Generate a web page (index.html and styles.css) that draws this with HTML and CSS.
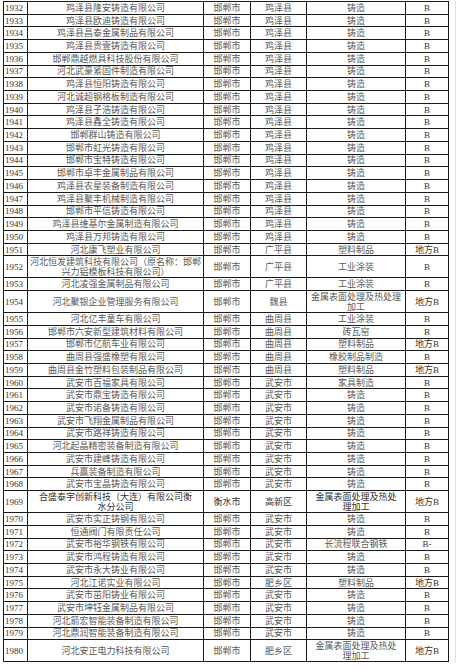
FILE: index.html
```html
<!DOCTYPE html>
<html lang="zh">
<head>
<meta charset="utf-8">
<link rel="stylesheet" href="styles.css">
</head>
<body>
<div class="page">
<table class="grid">
<colgroup><col class="c-no"><col class="c-name"><col class="c-city"><col class="c-county"><col class="c-ind"><col class="c-lvl"></colgroup>
<tbody>
<tr><td class="no">1932</td><td>鸡泽县隆安铸造有限公司</td><td>邯郸市</td><td>鸡泽县</td><td>铸造</td><td class="lv">B</td></tr>
<tr><td class="no">1933</td><td>鸡泽县欧迪铸造有限公司</td><td>邯郸市</td><td>鸡泽县</td><td>铸造</td><td class="lv">B</td></tr>
<tr><td class="no">1934</td><td>鸡泽县昌泰金属制品有限公司</td><td>邯郸市</td><td>鸡泽县</td><td>铸造</td><td class="lv">B</td></tr>
<tr><td class="no">1935</td><td>鸡泽县贵壹铸造有限公司</td><td>邯郸市</td><td>鸡泽县</td><td>铸造</td><td class="lv">B</td></tr>
<tr><td class="no">1936</td><td>邯郸鼎越燃具科技股份有限公司</td><td>邯郸市</td><td>鸡泽县</td><td>铸造</td><td class="lv">B</td></tr>
<tr><td class="no">1937</td><td>河北武豪紧固件制造有限公司</td><td>邯郸市</td><td>鸡泽县</td><td>铸造</td><td class="lv">B</td></tr>
<tr><td class="no">1938</td><td>鸡泽县恒阳铸造有限公司</td><td>邯郸市</td><td>鸡泽县</td><td>铸造</td><td class="lv">B</td></tr>
<tr><td class="no">1939</td><td>河北诚超钢格板制造有限公司</td><td>邯郸市</td><td>鸡泽县</td><td>铸造</td><td class="lv">B</td></tr>
<tr><td class="no">1940</td><td>鸡泽县子浩铸造有限公司</td><td>邯郸市</td><td>鸡泽县</td><td>铸造</td><td class="lv">B</td></tr>
<tr><td class="no">1941</td><td>鸡泽县鑫全铸造有限公司</td><td>邯郸市</td><td>鸡泽县</td><td>铸造</td><td class="lv">B</td></tr>
<tr><td class="no">1942</td><td>邯郸群山铸造有限公司</td><td>邯郸市</td><td>鸡泽县</td><td>铸造</td><td class="lv">B</td></tr>
<tr><td class="no">1943</td><td>邯郸市虹光铸造有限公司</td><td>邯郸市</td><td>鸡泽县</td><td>铸造</td><td class="lv">B</td></tr>
<tr><td class="no">1944</td><td>邯郸市宝特铸造有限公司</td><td>邯郸市</td><td>鸡泽县</td><td>铸造</td><td class="lv">B</td></tr>
<tr><td class="no">1945</td><td>邯郸市卓丰金属制品有限公司</td><td>邯郸市</td><td>鸡泽县</td><td>铸造</td><td class="lv">B</td></tr>
<tr><td class="no">1946</td><td>鸡泽县农星装备制造有限公司</td><td>邯郸市</td><td>鸡泽县</td><td>铸造</td><td class="lv">B</td></tr>
<tr><td class="no">1947</td><td>鸡泽县聚丰机械制造有限公司</td><td>邯郸市</td><td>鸡泽县</td><td>铸造</td><td class="lv">B</td></tr>
<tr><td class="no">1948</td><td>邯郸市平信铸造有限公司</td><td>邯郸市</td><td>鸡泽县</td><td>铸造</td><td class="lv">B</td></tr>
<tr><td class="no">1949</td><td>鸡泽县维基尔金属制造有限公司</td><td>邯郸市</td><td>鸡泽县</td><td>铸造</td><td class="lv">B</td></tr>
<tr><td class="no">1950</td><td>鸡泽县万邦铸造有限公司</td><td>邯郸市</td><td>鸡泽县</td><td>铸造</td><td class="lv">B</td></tr>
<tr><td class="no">1951</td><td>河北康飞塑业有限公司</td><td>邯郸市</td><td>广平县</td><td>塑料制品</td><td class="lv">地方B</td></tr>
<tr class="dbl"><td class="no">1952</td><td>河北恒发建筑科技有限公司（原名称：邯郸<br>兴力铝模板科技有限公司）</td><td>邯郸市</td><td>广平县</td><td>工业涂装</td><td class="lv">B</td></tr>
<tr><td class="no">1953</td><td>河北凌强金属制品有限公司</td><td>邯郸市</td><td>广平县</td><td>工业涂装</td><td class="lv">B</td></tr>
<tr class="dbl"><td class="no">1954</td><td>河北聚银企业管理服务有限公司</td><td>邯郸市</td><td>魏县</td><td>金属表面处理及热处理<br>加工</td><td class="lv">地方B</td></tr>
<tr><td class="no">1955</td><td>河北亿丰童车有限公司</td><td>邯郸市</td><td>曲周县</td><td>工业涂装</td><td class="lv">B</td></tr>
<tr><td class="no">1956</td><td>邯郸市六安新型建筑材料有限公司</td><td>邯郸市</td><td>曲周县</td><td>砖瓦窑</td><td class="lv">B</td></tr>
<tr><td class="no">1957</td><td>邯郸市亿航车业有限公司</td><td>邯郸市</td><td>曲周县</td><td>塑料制品</td><td class="lv">地方B</td></tr>
<tr><td class="no">1958</td><td>曲周县强盛橡塑有限公司</td><td>邯郸市</td><td>曲周县</td><td>橡胶制品制造</td><td class="lv">B</td></tr>
<tr><td class="no">1959</td><td>曲周县金竹塑料包装制品有限公司</td><td>邯郸市</td><td>曲周县</td><td>塑料制品</td><td class="lv">地方B</td></tr>
<tr><td class="no">1960</td><td>武安市百福家具有限公司</td><td>邯郸市</td><td>武安市</td><td>家具制造</td><td class="lv">B</td></tr>
<tr><td class="no">1961</td><td>武安市鼎宝铸造有限公司</td><td>邯郸市</td><td>武安市</td><td>铸造</td><td class="lv">B</td></tr>
<tr><td class="no">1962</td><td>武安市诺备铸造有限公司</td><td>邯郸市</td><td>武安市</td><td>铸造</td><td class="lv">B</td></tr>
<tr><td class="no">1963</td><td>武安市飞翔金属制品有限公司</td><td>邯郸市</td><td>武安市</td><td>铸造</td><td class="lv">B</td></tr>
<tr><td class="no">1964</td><td>武安市路祥铸造有限公司</td><td>邯郸市</td><td>武安市</td><td>铸造</td><td class="lv">B</td></tr>
<tr><td class="no">1965</td><td>河北起晶精密装备制造有限公司</td><td>邯郸市</td><td>武安市</td><td>铸造</td><td class="lv">B</td></tr>
<tr><td class="no">1966</td><td>武安市建峰铸造有限公司</td><td>邯郸市</td><td>武安市</td><td>铸造</td><td class="lv">B</td></tr>
<tr><td class="no">1967</td><td>兵赢装备制造有限公司</td><td>邯郸市</td><td>武安市</td><td>铸造</td><td class="lv">B</td></tr>
<tr><td class="no">1968</td><td>武安市宝晶铸造有限公司</td><td>邯郸市</td><td>武安市</td><td>铸造</td><td class="lv">B</td></tr>
<tr class="dbl dark"><td class="no">1969</td><td>合盛泰宇创新科技（大连）有限公司衡<br>水分公司</td><td>衡水市</td><td>高新区</td><td>金属表面处理及热处<br>理加工</td><td class="lv">地方B</td></tr>
<tr><td class="no">1970</td><td>武安市实正铸钢有限公司</td><td>邯郸市</td><td>武安市</td><td>铸造</td><td class="lv">B</td></tr>
<tr><td class="no">1971</td><td>恒通阀门有限责任公司</td><td>邯郸市</td><td>武安市</td><td>铸造</td><td class="lv">B</td></tr>
<tr><td class="no">1972</td><td>武安市裕华钢铁有限公司</td><td>邯郸市</td><td>武安市</td><td>长流程联合钢铁</td><td class="lv">B-</td></tr>
<tr><td class="no">1973</td><td>武安市鸿程铸造有限公司</td><td>邯郸市</td><td>武安市</td><td>铸造</td><td class="lv">B</td></tr>
<tr><td class="no">1974</td><td>武安市永大铸业有限公司</td><td>邯郸市</td><td>武安市</td><td>铸造</td><td class="lv">B</td></tr>
<tr><td class="no">1975</td><td>河北江诺实业有限公司</td><td>邯郸市</td><td>肥乡区</td><td>塑料制品</td><td class="lv">地方B</td></tr>
<tr><td class="no">1976</td><td>武安市茁阳铸业有限公司</td><td>邯郸市</td><td>武安市</td><td>铸造</td><td class="lv">B</td></tr>
<tr><td class="no">1977</td><td>武安市坤钰金属制品有限公司</td><td>邯郸市</td><td>武安市</td><td>铸造</td><td class="lv">B</td></tr>
<tr><td class="no">1978</td><td>河北箭宏智能装备制造有限公司</td><td>邯郸市</td><td>武安市</td><td>铸造</td><td class="lv">B</td></tr>
<tr><td class="no">1979</td><td>河北鼎润智能装备制造有限公司</td><td>邯郸市</td><td>武安市</td><td>铸造</td><td class="lv">B</td></tr>
<tr class="dbl"><td class="no">1980</td><td>河北安正电力科技有限公司</td><td>邯郸市</td><td>肥乡区</td><td>金属表面处理及热处<br>理加工</td><td class="lv">地方B</td></tr>
</tbody>
</table>
<div class="edge"></div>
</div>
</body>
</html>
```
FILE: styles.css
```css
html, body {
  margin: 0;
  padding: 0;
  background: #ffffff;
}
.page {
  display: flex;
  align-items: flex-start;
  padding: 1px 0 0 3px;
}
.grid {
  border-collapse: collapse;
  table-layout: fixed;
  width: 445px;
  border: 1.5px solid #111;
  font-family: "Noto Sans CJK SC", "Liberation Serif", serif;
  font-size: 9px;
  line-height: 10px;
  color: #5a5a5a;
}
.c-no { width: 24px; }
.c-name { width: 176px; }
.c-city { width: 47px; }
.c-county { width: 56px; }
.c-ind { width: 99px; }
.c-lvl { width: 43px; }
.grid tr { height: 12.72px; }
.grid tr.dbl { height: 22px; }
.grid tr.dbl td { line-height: 10px; }
.grid td {
  border: 1px solid #1a1a1a;
  padding: 0;
  text-align: center;
  vertical-align: middle;
  white-space: nowrap;
  overflow: hidden;
}
.grid td.no {
  font-family: "Liberation Serif", serif;
  font-size: 9px;
  color: #333;
  text-align: left;
  padding-left: 1px;
}
.grid td.lv {
  font-family: "Liberation Serif", "Noto Sans CJK SC", serif;
  color: #333;
}
.grid tr.dark td { color: #333; }
.edge {
  width: 1px;
  height: 662px;
  background: #e2e2e2;
  margin-left: 6px;
}
```
